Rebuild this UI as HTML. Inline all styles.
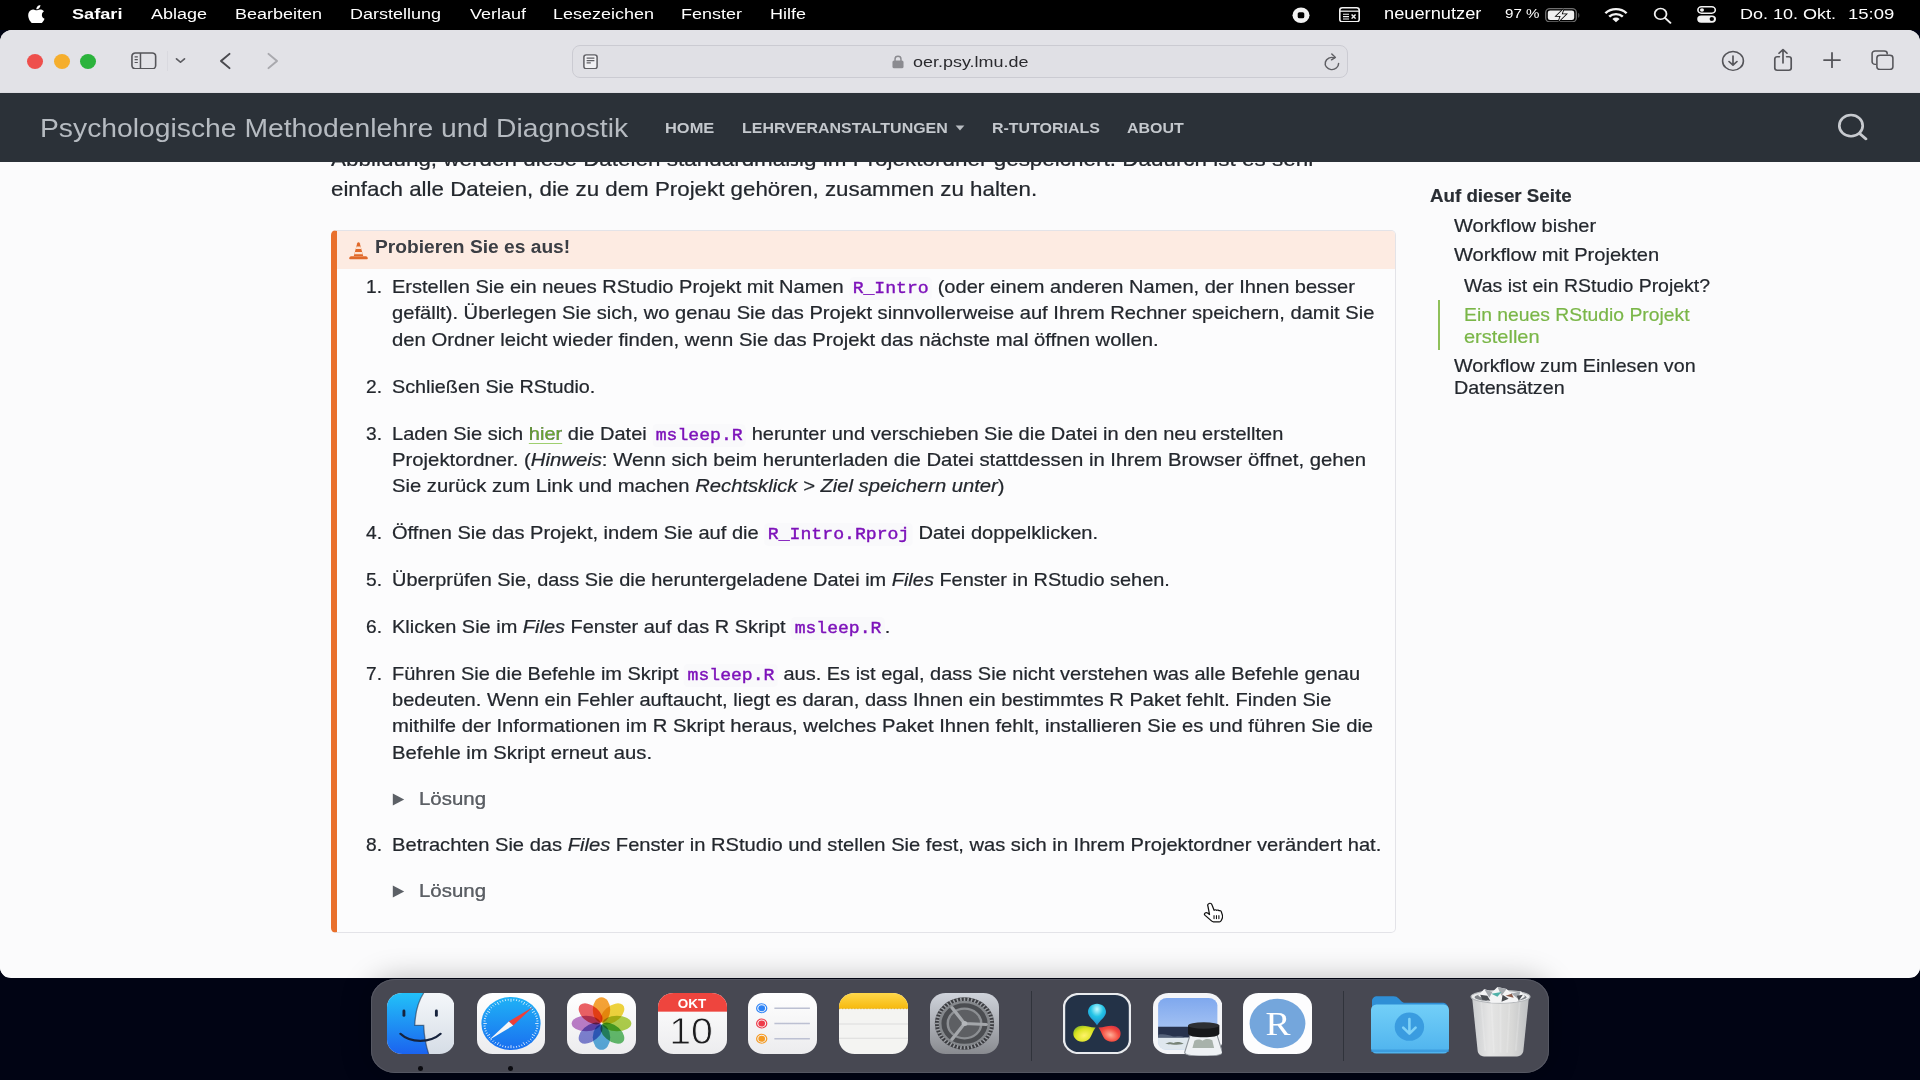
<!DOCTYPE html>
<html lang="de">
<head>
<meta charset="utf-8">
<title>Safari</title>
<style>
*{box-sizing:border-box;margin:0;padding:0}
html,body{width:1920px;height:1080px;overflow:hidden;background:#010414;font-family:"Liberation Sans",sans-serif}
.abs{position:absolute}
#desk{position:absolute;left:0;top:0;width:1920px;height:1080px;background:#010414;overflow:hidden}
/* ---------- menu bar ---------- */
#menubar{position:absolute;left:0;top:0;width:1920px;height:30px;background:#000;color:#fff;font-size:16px}
#menubar span.m{position:absolute;top:0;line-height:27px;white-space:nowrap;font-size:15.2px}
#menubar svg{position:absolute}
.sxo{transform-origin:0 50%}
.sx{display:inline-block;transform:scaleX(1.185);transform-origin:0 50%}
/* ---------- window ---------- */
#win{position:absolute;left:0;top:30px;width:1920px;height:947.800px;border-radius:12px 12px 11px 11px;background:#fbfbfc;overflow:hidden}
#toolbar{position:absolute;left:0;top:0;width:1920px;height:63px;background:#e2e2e7}
#urlbar{position:absolute;left:572px;top:15.2px;width:776px;height:32.6px;border-radius:8px;background:#e0e0e5;border:1px solid #cbcbd2}
#urltxt{position:absolute;left:913.2px;top:21.6px;font-size:15px;line-height:20px;color:#2a2a2e;white-space:nowrap}
.tl{position:absolute;top:23.8px;width:16px;height:15px;border-radius:50%}
/* ---------- site header ---------- */
#hdr{position:absolute;left:0;top:63px;width:1920px;height:69px;background:#2b3138;box-shadow:0 1px 2px rgba(0,0,0,.35)}
#brand{position:absolute;left:40px;top:18px;font-size:26px;line-height:34px;color:#b6bbc1;white-space:nowrap}
.nav{position:absolute;top:25px;font-size:15.5px;line-height:20px;font-weight:bold;color:#c4c8cd;white-space:nowrap;transform:scaleX(1.03);transform-origin:0 50%}
/* ---------- page ---------- */
#page{position:absolute;left:0;top:132px;width:1920px;height:815px;background:#fbfbfc;overflow:hidden}
.txt{position:absolute;white-space:nowrap;color:#23272d;transform-origin:0 50%;-webkit-text-stroke:.22px #23272d}
code{-webkit-text-stroke:.4px #7d12ba;font-family:"Liberation Mono",monospace;font-size:.905em;color:#7d12ba;background:#f9f9fb;padding:2px 3.2px;border-radius:4px}
a.lk{color:#6aaa2f;text-decoration:underline;text-decoration-color:#9fcf6f;text-underline-offset:3px}
#callout{position:absolute;left:331px;top:68.3px;width:1065px;height:702.7px;border:1px solid #e3e3e8;border-left:6px solid #e9702c;border-radius:5px;background:#fcfcfd}
#chead{position:absolute;left:0;top:0;width:1058px;height:38px;background:#fdebe2;border-radius:0 4px 0 0}
#ctitle{position:absolute;left:38px;top:2.700px;font-size:18px;line-height:26px;font-weight:bold;color:#3b3e44;white-space:nowrap;transform:scaleX(1.066);transform-origin:0 50%}
.toc{position:absolute;white-space:nowrap;color:#23272d;transform-origin:0 50%;-webkit-text-stroke:.2px currentColor}
/* ---------- dock ---------- */
#dock{position:absolute;left:371px;top:979px;width:1177.5px;height:94px;border-radius:24px/22px;background:#474852;box-shadow:inset 0 0 0 1px #555762,0 0 30px rgba(0,0,0,.27)}
.ic{position:absolute;top:13px;width:70px;height:62px;border-radius:15px;overflow:hidden}
.dot{position:absolute;top:87px;width:5px;height:4.6px;border-radius:50%;background:#0b0b10}
</style>
</head>
<body>
<div id="desk">

<!-- ================= WINDOW ================= -->
<div id="win">
  <div id="toolbar">
    <div class="tl" style="left:27px;background:#ee4f4c"></div>
    <div class="tl" style="left:53.75px;background:#f5ae2d"></div>
    <div class="tl" style="left:80px;background:#2bb33c"></div>
    <div id="urlbar"></div>
    <div id="urltxt" class="sxo" style="transform:scaleX(1.197)">oer.psy.lmu.de</div>
    
    <!-- sidebar toggle -->
    <svg class="abs" style="left:131px;top:21.6px" width="25.6" height="17.8" viewBox="0 0 27 19" preserveAspectRatio="none"><rect x="1" y="1" width="25" height="17" rx="3.6" fill="none" stroke="#55555a" stroke-width="1.7"/><path d="M10 1v17" stroke="#55555a" stroke-width="1.6"/><path d="M3.8 5.2h3.4M3.8 8.2h3.4M3.8 11.2h3.4" stroke="#55555a" stroke-width="1.3"/></svg>
    <div class="abs" style="left:166.500px;top:21px;width:1px;height:20px;background:#d9d9df"></div>
    <svg class="abs" style="left:175px;top:27.36px" width="11" height="7.28" viewBox="0 0 11 8" preserveAspectRatio="none"><path d="M1.5 2l4 3.8 4-3.8" fill="none" stroke="#5c5c61" stroke-width="1.7" stroke-linecap="round" stroke-linejoin="round"/></svg>
    <svg class="abs" style="left:218px;top:21.800px" width="14" height="18" viewBox="0 0 14 20" preserveAspectRatio="none"><path d="M11.5 2L3 10l8.500 8" fill="none" stroke="#4a4a4f" stroke-width="2" stroke-linecap="round" stroke-linejoin="round"/></svg>
    <svg class="abs" style="left:266px;top:21.800px" width="14" height="18" viewBox="0 0 14 20" preserveAspectRatio="none"><path d="M2.500 2L11 10l-8.500 8" fill="none" stroke="#a9a9ae" stroke-width="2" stroke-linecap="round" stroke-linejoin="round"/></svg>
    <!-- reader -->
    <svg class="abs" style="left:583px;top:23.77px" width="15" height="15.47" viewBox="0 0 15 17" preserveAspectRatio="none"><rect x=".9" y=".9" width="13.2" height="15.2" rx="2.4" fill="#f1f1f4" stroke="#5f5f64" stroke-width="1.5"/><path d="M3.6 4.6h7.800M3.600 7.200h7.800M3.600 9.800h4.200" stroke="#5f5f64" stroke-width="1.3"/></svg>
    <!-- lock -->
    <svg class="abs" style="left:891.500px;top:25.48px" width="12" height="13.65" viewBox="0 0 13 16" preserveAspectRatio="none"><rect x=".5" y="6.400" width="12" height="9.200" rx="1.800" fill="#8b8b90"/><path d="M3.300 7V4.600a3.200 3.200 0 0 1 6.400 0V7" fill="none" stroke="#8b8b90" stroke-width="1.600"/></svg>
    <!-- reload -->
    <svg class="abs" style="left:1323.200px;top:22.90px" width="18" height="18.20" viewBox="0 0 18 20" preserveAspectRatio="none"><path d="M15.600 11.600a6.700 6.700 0 1 1-4.300-6.300" fill="none" stroke="#5f5f64" stroke-width="1.500" stroke-linecap="round"/><path d="M8.800 1.200l3.600 3.600-3.900 2.700" fill="none" stroke="#5f5f64" stroke-width="1.500" stroke-linecap="round" stroke-linejoin="round"/></svg>
    <!-- download -->
    <svg class="abs" style="left:1721px;top:20.08px" width="24" height="21.84" viewBox="0 0 24 24" preserveAspectRatio="none"><circle cx="12" cy="12" r="10.400" fill="none" stroke="#55555a" stroke-width="1.600"/><path d="M12 6.600v9.600M8 12.600l4 4 4-4" fill="none" stroke="#55555a" stroke-width="1.700" stroke-linecap="round" stroke-linejoin="round"/></svg>
    <!-- share -->
    <svg class="abs" style="left:1773px;top:18.17px" width="20" height="23.66" viewBox="0 0 20 26" preserveAspectRatio="none"><path d="M6.400 9.600H4.200a2.400 2.400 0 0 0-2.400 2.400v10a2.400 2.400 0 0 0 2.400 2.400h11.600a2.400 2.400 0 0 0 2.400-2.400V12a2.400 2.400 0 0 0-2.400-2.400h-2.200" fill="none" stroke="#55555a" stroke-width="1.700" stroke-linecap="round"/><path d="M10 16.400V2.200M6 5.800l4-4 4 4" fill="none" stroke="#55555a" stroke-width="1.700" stroke-linecap="round" stroke-linejoin="round"/></svg>
    <!-- plus -->
    <svg class="abs" style="left:1822.800px;top:21.700px" width="18" height="16.380" viewBox="0 0 18 18" preserveAspectRatio="none"><path d="M9 1v16M1 9h16" stroke="#55555a" stroke-width="1.800" stroke-linecap="round"/></svg>
    <!-- tabs -->
    <svg class="abs" style="left:1871px;top:20.300px" width="23" height="20.400" viewBox="0 0 25 25" preserveAspectRatio="none"><path d="M5.600 17.600H4.400A3.200 3.200 0 0 1 1.200 14.400V4.400A3.200 3.200 0 0 1 4.400 1.200h10a3.200 3.200 0 0 1 3.200 3.200V5.600" fill="none" stroke="#55555a" stroke-width="1.700"/><rect x="6.400" y="6.400" width="17.400" height="17.400" rx="3.400" fill="none" stroke="#55555a" stroke-width="1.700"/></svg>

  </div>

  <div id="hdr">
    <div id="brand" class="sxo" style="transform:scaleX(1.088)">Psychologische Methodenlehre und Diagnostik</div>
    <div class="nav" style="left:665px;transform:scaleX(1.06)">HOME</div>
    <div class="nav" style="left:742px">LEHRVERANSTALTUNGEN</div>
    <div class="nav" style="left:992px">R-TUTORIALS</div>
    <div class="nav" style="left:1127px">ABOUT</div>
    
    <svg class="abs" style="left:955px;top:32px" width="10" height="6" viewBox="0 0 10 6"><path d="M.6.600h8.800L5 5.400z" fill="#b9bdc2"/></svg>
    <svg class="abs" style="left:1836.600px;top:20.100px" width="32" height="29" viewBox="0 0 32 32" preserveAspectRatio="none"><circle cx="14" cy="14" r="11.700" fill="none" stroke="#c7cacf" stroke-width="2.700"/><path d="M22.600 22.600l6.400 6" stroke="#c7cacf" stroke-width="2.900" stroke-linecap="round"/></svg>

  </div>

  <div id="page">
<!--PAGE-START-->

<div id="callout"><div id="chead"></div>
<svg class="abs" style="left:12px;top:9.700px" width="19" height="20" viewBox="0 0 19 20"><path d="M9.500 1.200c.7 0 1.100.3 1.300 1L14.200 15H4.800L8.200 2.200c.2-.7.600-1 1.300-1z" fill="#e0692a"/><path d="M7.400 5.600h4.200l.6 2.300H6.800zM5.900 11h7.200l.6 2.300H5.300z" fill="#fbe3d3"/><path d="M2.200 15.200h14.600c1.300 0 2 1.300 2 2.200 0 .5-.3.800-.8.800H1c-.5 0-.8-.3-.8-.8 0-.9.700-2.200 2-2.200z" fill="#e0692a"/></svg>
<div id="ctitle">Probieren Sie es aus!</div>
</div>
<div class="txt" style="left:330.6px;top:-17.6px;font-size:20.6px;line-height:29px;transform:scaleX(1.0902);">Abbildung, werden diese Dateien standardmäßig im Projektordner gespeichert. Dadurch ist es sehr</div>
<div class="txt" style="left:330.6px;top:11.9px;font-size:20.6px;line-height:29px;transform:scaleX(1.0840);">einfach alle Dateien, die zu dem Projekt gehören, zusammen zu halten.</div>
<div class="txt" style="left:365.8px;top:111.7px;font-size:18.5px;line-height:26.35px;transform:scaleX(1.0364);">1.</div>
<div class="txt" style="left:365.8px;top:211.7px;font-size:18.5px;line-height:26.35px;transform:scaleX(1.0364);">2.</div>
<div class="txt" style="left:365.8px;top:258.7px;font-size:18.5px;line-height:26.35px;transform:scaleX(1.0364);">3.</div>
<div class="txt" style="left:365.8px;top:357.7px;font-size:18.5px;line-height:26.35px;transform:scaleX(1.0364);">4.</div>
<div class="txt" style="left:365.8px;top:404.7px;font-size:18.5px;line-height:26.35px;transform:scaleX(1.0364);">5.</div>
<div class="txt" style="left:365.8px;top:451.7px;font-size:18.5px;line-height:26.35px;transform:scaleX(1.0364);">6.</div>
<div class="txt" style="left:365.8px;top:498.7px;font-size:18.5px;line-height:26.35px;transform:scaleX(1.0364);">7.</div>
<div class="txt" style="left:365.8px;top:669.7px;font-size:18.5px;line-height:26.35px;transform:scaleX(1.0364);">8.</div>
<div class="txt" style="left:392.1px;top:111.7px;font-size:18.5px;line-height:26.35px;transform:scaleX(1.0818);">Erstellen Sie ein neues RStudio Projekt mit Namen <code>R_Intro</code> (oder einem anderen Namen, der Ihnen besser</div>
<div class="txt" style="left:392.1px;top:138.1px;font-size:18.5px;line-height:26.35px;transform:scaleX(1.0881);">gefällt). Überlegen Sie sich, wo genau Sie das Projekt sinnvollerweise auf Ihrem Rechner speichern, damit Sie</div>
<div class="txt" style="left:392.1px;top:164.5px;font-size:18.5px;line-height:26.35px;transform:scaleX(1.0953);">den Ordner leicht wieder finden, wenn Sie das Projekt das nächste mal öffnen wollen.</div>
<div class="txt" style="left:392.1px;top:211.7px;font-size:18.5px;line-height:26.35px;transform:scaleX(1.0686);">Schließen Sie RStudio.</div>
<div class="txt" style="left:392.1px;top:258.7px;font-size:18.5px;line-height:26.35px;transform:scaleX(1.0815);">Laden Sie sich <a class="lk">hier</a> die Datei <code>msleep.R</code> herunter und verschieben Sie die Datei in den neu erstellten</div>
<div class="txt" style="left:392.1px;top:285.0px;font-size:18.5px;line-height:26.35px;transform:scaleX(1.0972);">Projektordner. (<i>Hinweis</i>: Wenn sich beim herunterladen die Datei stattdessen in Ihrem Browser öffnet, gehen</div>
<div class="txt" style="left:392.1px;top:311.3px;font-size:18.5px;line-height:26.35px;transform:scaleX(1.0921);">Sie zurück zum Link und machen <i>Rechtsklick &gt; Ziel speichern unter</i>)</div>
<div class="txt" style="left:392.1px;top:357.7px;font-size:18.5px;line-height:26.35px;transform:scaleX(1.0850);">Öffnen Sie das Projekt, indem Sie auf die <code>R_Intro.Rproj</code> Datei doppelklicken.</div>
<div class="txt" style="left:392.1px;top:404.7px;font-size:18.5px;line-height:26.35px;transform:scaleX(1.0775);">Überprüfen Sie, dass Sie die heruntergeladene Datei im <i>Files</i> Fenster in RStudio sehen.</div>
<div class="txt" style="left:392.1px;top:451.7px;font-size:18.5px;line-height:26.35px;transform:scaleX(1.0785);">Klicken Sie im <i>Files</i> Fenster auf das R Skript <code>msleep.R</code>.</div>
<div class="txt" style="left:392.1px;top:498.7px;font-size:18.5px;line-height:26.35px;transform:scaleX(1.0804);">Führen Sie die Befehle im Skript <code>msleep.R</code> aus. Es ist egal, dass Sie nicht verstehen was alle Befehle genau</div>
<div class="txt" style="left:392.1px;top:525.0px;font-size:18.5px;line-height:26.35px;transform:scaleX(1.0854);">bedeuten. Wenn ein Fehler auftaucht, liegt es daran, dass Ihnen ein bestimmtes R Paket fehlt. Finden Sie</div>
<div class="txt" style="left:392.1px;top:551.3px;font-size:18.5px;line-height:26.35px;transform:scaleX(1.0929);">mithilfe der Informationen im R Skript heraus, welches Paket Ihnen fehlt, installieren Sie es und führen Sie die</div>
<div class="txt" style="left:392.1px;top:577.7px;font-size:18.5px;line-height:26.35px;transform:scaleX(1.0949);">Befehle im Skript erneut aus.</div>
<div class="txt" style="left:419.4px;top:623.7px;font-size:18.5px;line-height:26.35px;transform:scaleX(1.1037);color:#5c6066">Lösung</div>
<div class="txt" style="left:392.1px;top:669.7px;font-size:18.5px;line-height:26.35px;transform:scaleX(1.0883);">Betrachten Sie das <i>Files</i> Fenster in RStudio und stellen Sie fest, was sich in Ihrem Projektordner verändert hat.</div>
<div class="txt" style="left:419.4px;top:715.7px;font-size:18.5px;line-height:26.35px;transform:scaleX(1.1037);color:#5c6066">Lösung</div>
<div class="toc" style="left:1429.6px;top:22.8px;font-size:18.4px;line-height:22px;transform:scaleX(1.0187);font-weight:bold;color:#2a2e34">Auf dieser Seite</div>
<div class="toc" style="left:1453.6px;top:52.8px;font-size:18.4px;line-height:22px;transform:scaleX(1.0890);">Workflow bisher</div>
<div class="toc" style="left:1453.6px;top:82.3px;font-size:18.4px;line-height:22px;transform:scaleX(1.0926);">Workflow mit Projekten</div>
<div class="toc" style="left:1464.1px;top:112.6px;font-size:18.4px;line-height:22px;transform:scaleX(1.0591);">Was ist ein RStudio Projekt?</div>
<div class="toc" style="left:1464.1px;top:141.8px;font-size:18.4px;line-height:22px;transform:scaleX(1.0508);color:#7ab648">Ein neues RStudio Projekt</div>
<div class="toc" style="left:1464.1px;top:163.8px;font-size:18.4px;line-height:22px;transform:scaleX(1.0875);color:#7ab648">erstellen</div>
<div class="toc" style="left:1453.6px;top:193.3px;font-size:18.4px;line-height:22px;transform:scaleX(1.0712);">Workflow zum Einlesen von</div>
<div class="toc" style="left:1453.6px;top:215.3px;font-size:18.4px;line-height:22px;transform:scaleX(1.0710);">Datensätzen</div>
<svg class="abs" style="left:392px;top:630.8px" width="13" height="13" viewBox="0 0 13 13"><path d="M.8.600l11.400 5.900L.8 12.400z" fill="#5c6066"/></svg>
<svg class="abs" style="left:392px;top:722.8px" width="13" height="13" viewBox="0 0 13 13"><path d="M.8.600l11.400 5.900L.8 12.400z" fill="#5c6066"/></svg>
<div class="abs" style="left:1438.300px;top:138.300px;width:2px;height:50.200px;background:#8fc05a"></div>
<!--PAGE-END-->
<svg class="abs" style="left:1201.800px;top:740px" width="21.500" height="21.600" viewBox="0 0 22 24" preserveAspectRatio="none"><path d="M7.300 1.600c1.200-.5 2.300.1 2.800 1.300l2.300 6.300c.6-.7 1.900-.8 2.600.1.700-.6 1.900-.5 2.500.5.900-.4 2 .1 2.300 1.100l1 3.400c.6 2 .2 3.400-.5 4.800l-.9 1.900c-.3.700-.9 1-1.600 1h-6.100c-.7 0-1.200-.2-1.700-.7l-6.800-6.400c-.8-.8-.8-1.900-.1-2.600.8-.7 1.800-.6 2.600 0l2 1.600L6 4.400c-.4-1.200.1-2.300 1.300-2.800z" fill="#fff" stroke="#111" stroke-width="1.300" stroke-linejoin="round"/><path d="M12.300 15v3.600M14.800 15v3.600M17.300 15v3.600" stroke="#111" stroke-width="1.100" stroke-linecap="round"/></svg>

  </div>
</div>

<!-- ================= MENU BAR ================= -->
<div id="menubar">
  
  <svg style="left:27.600px;top:4.600px" width="17.600" height="18.700" viewBox="2 0 21 24" preserveAspectRatio="none"><path fill="#fff" d="M12.152 6.896c-.948 0-2.415-1.078-3.96-1.04-2.04.027-3.91 1.183-4.961 3.014-2.117 3.675-.546 9.103 1.519 12.09 1.013 1.454 2.208 3.09 3.792 3.039 1.52-.065 2.09-.987 3.935-.987 1.831 0 2.35.987 3.96.948 1.637-.026 2.676-1.48 3.676-2.948 1.156-1.688 1.636-3.325 1.662-3.415-.039-.013-3.182-1.221-3.22-4.857-.026-3.04 2.48-4.494 2.597-4.559-1.429-2.09-3.623-2.324-4.39-2.376-2-.156-3.675 1.09-4.61 1.09zM15.53 3.83c.843-1.012 1.4-2.427 1.245-3.83-1.207.052-2.662.805-3.532 1.818-.78.896-1.454 2.338-1.273 3.714 1.338.104 2.715-.688 3.559-1.701"/></svg>
  <span class="m sx" style="left:71.5px;font-weight:bold;transform:scaleX(1.195)">Safari</span>
  <span class="m sx" style="left:151px">Ablage</span>
  <span class="m sx" style="left:235px">Bearbeiten</span>
  <span class="m sx" style="left:350px">Darstellung</span>
  <span class="m sx" style="left:470px">Verlauf</span>
  <span class="m sx" style="left:553px">Lesezeichen</span>
  <span class="m sx" style="left:681px">Fenster</span>
  <span class="m sx" style="left:770px">Hilfe</span>
  <!-- record icon -->
  <svg style="left:1292px;top:6.81px" width="18" height="16.38" viewBox="0 0 18 18" preserveAspectRatio="none"><circle cx="9" cy="9" r="8.5" fill="#f2f2f2"/><rect x="5.700" y="5.700" width="6.600" height="6.600" rx="1.700" fill="#000"/></svg>
  <!-- keyboard/input icon -->
  <svg style="left:1339px;top:6.76px" width="21" height="15.47" viewBox="0 0 21 17" preserveAspectRatio="none"><rect x=".8" y=".8" width="19.4" height="15.4" rx="2.6" fill="none" stroke="#f2f2f2" stroke-width="1.6"/><path d="M1 4.6h19" stroke="#f2f2f2" stroke-width="1.4"/><path d="M4 8h6M4 10.6h6M4 13.2h6" stroke="#f2f2f2" stroke-width="1.2"/><path d="M12.6 8.2l4 4.6M16.6 8.2l-4 4.6" stroke="#f2f2f2" stroke-width="1.5"/></svg>
  <span class="m sx" style="left:1383.5px;font-size:16.6px;line-height:28.3px;transform:scaleX(1.10)">neuernutzer</span>
  <span class="m sx" style="left:1504.500px;font-size:13.1px;line-height:28.4px;transform:scaleX(1.155)">97&nbsp;%</span>
  <!-- battery -->
  <svg style="left:1545px;top:7.72px" width="36" height="14.56" viewBox="0 0 36 16" preserveAspectRatio="none"><rect x=".7" y=".7" width="30.6" height="14.6" rx="4.2" fill="none" stroke="#707070" stroke-width="1.300"/><rect x="2.8" y="2.8" width="26.4" height="10.4" rx="2.4" fill="#f0f0f0"/><path d="M33.4 5.4c1.2.5 1.2 4.7 0 5.2z" fill="#707070"/><path d="M18.6 1.2l-7.2 7.6h4.2l-2 6 7.4-7.8h-4.3z" fill="#f0f0f0" stroke="#000" stroke-width="1.7" paint-order="stroke"/></svg>
  <!-- wifi -->
  <svg style="left:1604px;top:6.81px" width="24" height="16.38" viewBox="0 0 24 18" preserveAspectRatio="none"><g fill="none" stroke="#f2f2f2" stroke-width="2.5" stroke-linecap="butt"><path d="M1.4 6.8a15 15 0 0 1 21.2 0"/><path d="M5.2 10.6a9.6 9.6 0 0 1 13.6 0"/></g><path d="M12 16.8l-3.6-3.7a5.1 5.1 0 0 1 7.2 0z" fill="#f2f2f2"/></svg>
  <!-- search -->
  <svg style="left:1653px;top:6.86px" width="19" height="17.29" viewBox="0 0 19 19" preserveAspectRatio="none"><circle cx="7.6" cy="7.6" r="5.9" fill="none" stroke="#f2f2f2" stroke-width="1.8"/><path d="M12 12l5.4 5.4" stroke="#f2f2f2" stroke-width="2" stroke-linecap="round"/></svg>
  <!-- control center -->
  <svg style="left:1697px;top:5.86px" width="20" height="17.29" viewBox="0 0 20 19" preserveAspectRatio="none"><rect x=".9" y=".9" width="17.4" height="7" rx="3.5" fill="none" stroke="#f2f2f2" stroke-width="1.6"/><circle cx="5" cy="4.4" r="2" fill="#f2f2f2"/><rect x=".2" y="10.4" width="18.8" height="8" rx="4" fill="#f2f2f2"/><circle cx="14.8" cy="14.4" r="2.2" fill="#000"/></svg>
  <span class="m sx" style="left:1740px;font-size:15px;transform:scaleX(1.2)">Do. 10. Okt.</span><span class="m sx" style="left:1848px;font-size:15px;transform:scaleX(1.233)">15:09</span>

</div>

<!-- ================= DOCK ================= -->
<div id="dock">
  <!--DOCK-START-->
<svg width="0" height="0" style="position:absolute"><defs>
<linearGradient id="gFb" x1="0" y1="0" x2="0" y2="1"><stop offset="0" stop-color="#22c1f8"/><stop offset="1" stop-color="#1b63ef"/></linearGradient>
<linearGradient id="gFw" x1="0" y1="0" x2="0" y2="1"><stop offset="0" stop-color="#f4f7fa"/><stop offset="1" stop-color="#d6dde6"/></linearGradient>
<linearGradient id="gW" x1="0" y1="0" x2="0" y2="1"><stop offset="0" stop-color="#ffffff"/><stop offset="1" stop-color="#ececee"/></linearGradient>
<linearGradient id="gSaf" x1="0" y1="0" x2="0" y2="1"><stop offset="0" stop-color="#1fb2f6"/><stop offset="1" stop-color="#1a6ff0"/></linearGradient>
<linearGradient id="gNote" x1="0" y1="0" x2="0" y2="1"><stop offset="0" stop-color="#ffd84a"/><stop offset="1" stop-color="#f6b90e"/></linearGradient>
<linearGradient id="gGear" x1="0" y1="0" x2="0" y2="1"><stop offset="0" stop-color="#d9dadc"/><stop offset="1" stop-color="#8b8d91"/></linearGradient>
<linearGradient id="gFold" x1="0" y1="0" x2="0" y2="1"><stop offset="0" stop-color="#72cff8"/><stop offset="1" stop-color="#4fb3ee"/></linearGradient>
<linearGradient id="gTrash" x1="0" y1="0" x2="1" y2="0"><stop offset="0" stop-color="#d4d6d8"/><stop offset=".3" stop-color="#f1f1f0"/><stop offset=".7" stop-color="#e3e3e1"/><stop offset="1" stop-color="#c6c8ca"/></linearGradient>
<radialGradient id="gB" cx=".5" cy=".25" r=".7"><stop offset="0" stop-color="#c6fbff"/><stop offset=".5" stop-color="#23c4e6"/><stop offset="1" stop-color="#1f8fd0"/></radialGradient>
<radialGradient id="gY" cx=".35" cy=".4" r=".7"><stop offset="0" stop-color="#fff36a"/><stop offset=".6" stop-color="#d9e21f"/><stop offset="1" stop-color="#7fb52c"/></radialGradient>
<radialGradient id="gR" cx=".6" cy=".4" r=".7"><stop offset="0" stop-color="#ffb199"/><stop offset=".55" stop-color="#f4483c"/><stop offset="1" stop-color="#c52a4a"/></radialGradient>
<clipPath id="cpIc"><rect x="0" y="0" width="68" height="68" rx="15.500"/></clipPath>
</defs></svg>
<svg class="abs" style="left:15.5px;top:14.0px" width="67.5" height="61.0" viewBox="0 0 68 68" preserveAspectRatio="none"><g clip-path="url(#cpIc)"><rect width="68" height="68" fill="url(#gFw)"/>
<path d="M0 0h37c-5.500 9-8.500 22-9 36h9c.3 11 1.800 21 5 32H0z" fill="url(#gFb)"/>
<path d="M37 0c-5.500 9-8.500 22-9 36h9c.3 11 1.800 21 5 32" fill="none" stroke="#1d2b45" stroke-width="1.300" opacity=".55"/>
<rect x="15.600" y="18.500" width="2.900" height="8" rx="1.450" fill="#16233d"/><rect x="48.300" y="18.500" width="2.900" height="8" rx="1.450" fill="#16233d"/>
<path d="M13.500 45.500c10 10.500 30 10.500 40.500 0" fill="none" stroke="#16233d" stroke-width="2.300" stroke-linecap="round"/></g></svg>
<svg class="abs" style="left:106.0px;top:14.0px" width="68.0" height="61.0" viewBox="0 0 68 68" preserveAspectRatio="none"><rect width="68" height="68" rx="15.500" fill="url(#gW)"/><circle cx="34" cy="34" r="29.600" fill="url(#gSaf)"/>
<path d="M34.00 9.80L34.00 6.40M36.68 8.54L36.88 6.55M39.32 8.96L39.74 7.00M41.91 9.65L42.53 7.75M44.41 10.61L45.23 8.79M46.10 13.04L47.80 10.10M49.05 13.29L50.22 11.67M51.13 14.98L52.47 13.49M53.02 16.87L54.51 15.53M54.71 18.95L56.33 17.78M54.96 21.90L57.90 20.20M57.39 23.59L59.21 22.77M58.35 26.09L60.25 25.47M59.04 28.68L61.00 28.26M59.46 31.32L61.45 31.12M58.20 34.00L61.60 34.00M59.46 36.68L61.45 36.88M59.04 39.32L61.00 39.74M58.35 41.91L60.25 42.53M57.39 44.41L59.21 45.23M54.96 46.10L57.90 47.80M54.71 49.05L56.33 50.22M53.02 51.13L54.51 52.47M51.13 53.02L52.47 54.51M49.05 54.71L50.22 56.33M46.10 54.96L47.80 57.90M44.41 57.39L45.23 59.21M41.91 58.35L42.53 60.25M39.32 59.04L39.74 61.00M36.68 59.46L36.88 61.45M34.00 58.20L34.00 61.60M31.32 59.46L31.12 61.45M28.68 59.04L28.26 61.00M26.09 58.35L25.47 60.25M23.59 57.39L22.77 59.21M21.90 54.96L20.20 57.90M18.95 54.71L17.78 56.33M16.87 53.02L15.53 54.51M14.98 51.13L13.49 52.47M13.29 49.05L11.67 50.22M13.04 46.10L10.10 47.80M10.61 44.41L8.79 45.23M9.65 41.91L7.75 42.53M8.96 39.32L7.00 39.74M8.54 36.68L6.55 36.88M9.80 34.00L6.40 34.00M8.54 31.32L6.55 31.12M8.96 28.68L7.00 28.26M9.65 26.09L7.75 25.47M10.61 23.59L8.79 22.77M13.04 21.90L10.10 20.20M13.29 18.95L11.67 17.78M14.98 16.87L13.49 15.53M16.87 14.98L15.53 13.49M18.95 13.29L17.78 11.67M21.90 13.04L20.20 10.10M23.59 10.61L22.77 8.79M26.09 9.65L25.47 7.75M28.68 8.96L28.26 7.00M31.32 8.54L31.12 6.55" stroke="#fff" stroke-width=".9" opacity=".9"/>
<path d="M56 15.500L31.800 31.800 36.200 36.200z" fill="#ee3f39"/><path d="M12 52.500L31.800 31.800 36.200 36.200z" fill="#f6f6f6"/></svg>
<svg class="abs" style="left:196.0px;top:14.0px" width="69.0" height="61.0" viewBox="0 0 68 68" preserveAspectRatio="none"><rect width="68" height="68" rx="15.500" fill="url(#gW)"/><ellipse cx="34" cy="18.800" rx="8.600" ry="14.200" fill="#f6981a" opacity=".88" style="mix-blend-mode:multiply" transform="rotate(0 34 34)"/><ellipse cx="34" cy="18.800" rx="8.600" ry="14.200" fill="#f0cf22" opacity=".88" style="mix-blend-mode:multiply" transform="rotate(45 34 34)"/><ellipse cx="34" cy="18.800" rx="8.600" ry="14.200" fill="#a6cc33" opacity=".88" style="mix-blend-mode:multiply" transform="rotate(90 34 34)"/><ellipse cx="34" cy="18.800" rx="8.600" ry="14.200" fill="#4fb65a" opacity=".88" style="mix-blend-mode:multiply" transform="rotate(135 34 34)"/><ellipse cx="34" cy="18.800" rx="8.600" ry="14.200" fill="#45a3dc" opacity=".88" style="mix-blend-mode:multiply" transform="rotate(180 34 34)"/><ellipse cx="34" cy="18.800" rx="8.600" ry="14.200" fill="#6f74cf" opacity=".88" style="mix-blend-mode:multiply" transform="rotate(225 34 34)"/><ellipse cx="34" cy="18.800" rx="8.600" ry="14.200" fill="#b66ec4" opacity=".88" style="mix-blend-mode:multiply" transform="rotate(270 34 34)"/><ellipse cx="34" cy="18.800" rx="8.600" ry="14.200" fill="#ec4b4f" opacity=".88" style="mix-blend-mode:multiply" transform="rotate(315 34 34)"/></svg>
<svg class="abs" style="left:286.5px;top:14.0px" width="69.0" height="61.0" viewBox="0 0 68 68" preserveAspectRatio="none"><g clip-path="url(#cpIc)"><rect width="68" height="68" fill="url(#gW)"/><rect width="68" height="20.800" fill="#ee453e"/></g>
<text x="33.500" y="16.200" text-anchor="middle" font-family="Liberation Sans" font-weight="bold" font-size="13.500" fill="#fff" textLength="28" lengthAdjust="spacingAndGlyphs">OKT</text>
<text x="32.500" y="57" text-anchor="middle" font-family="Liberation Sans" font-size="41" fill="#1d1d1f" stroke="#f5f5f6" stroke-width=".9" textLength="43" lengthAdjust="spacingAndGlyphs">10</text></svg>
<svg class="abs" style="left:377.0px;top:14.0px" width="69.0" height="61.0" viewBox="0 0 68 68" preserveAspectRatio="none"><rect width="68" height="68" rx="15.500" fill="url(#gW)"/><circle cx="13.500" cy="17" r="5" fill="none" stroke="#2f84f6" stroke-width="1.200"/><circle cx="13.500" cy="17" r="3.300" fill="#2f84f6"/><path d="M26 17h35" stroke="#bcc0d2" stroke-width="1.700"/><circle cx="13.500" cy="34" r="5" fill="none" stroke="#ee3b4a" stroke-width="1.200"/><circle cx="13.500" cy="34" r="3.300" fill="#ee3b4a"/><path d="M26 34h35" stroke="#bcc0d2" stroke-width="1.700"/><circle cx="13.500" cy="51" r="5" fill="none" stroke="#f59b23" stroke-width="1.200"/><circle cx="13.500" cy="51" r="3.300" fill="#f59b23"/><path d="M26 51h35" stroke="#bcc0d2" stroke-width="1.700"/></svg>
<svg class="abs" style="left:468.0px;top:14.0px" width="69.0" height="61.0" viewBox="0 0 68 68" preserveAspectRatio="none"><g clip-path="url(#cpIc)"><rect width="68" height="68" fill="#f4f4f2"/><rect width="68" height="17.500" fill="url(#gNote)"/>
<path d="M0 17.500h68" stroke="#d9a30c" stroke-width=".8" stroke-dasharray="1.200 1.800"/>
<path d="M0 34.500h68M0 50.500h68" stroke="#dcdcdc" stroke-width="1.200"/></g></svg>
<svg class="abs" style="left:558.5px;top:14.0px" width="69.0" height="61.0" viewBox="0 0 68 68" preserveAspectRatio="none"><linearGradient id="gGear2" x1="0" y1="0" x2="0" y2="1"><stop offset="0" stop-color="#cfd3db"/><stop offset="1" stop-color="#898b90"/></linearGradient>
<rect width="68" height="68" rx="15.500" fill="url(#gGear2)"/>
<circle cx="34" cy="34" r="29.200" fill="#3b3c40"/>
<path d="M34.00 9.20L34.00 5.00M37.24 9.41L37.79 5.25M40.42 10.05L41.51 5.99M43.49 11.09L45.10 7.21M46.40 12.52L48.50 8.89M49.10 14.32L51.65 10.99M51.54 16.46L54.51 13.49M53.68 18.90L57.01 16.35M55.48 21.60L59.11 19.50M56.91 24.51L60.79 22.90M57.95 27.58L62.01 26.49M58.59 30.76L62.75 30.21M58.80 34.00L63.00 34.00M58.59 37.24L62.75 37.79M57.95 40.42L62.01 41.51M56.91 43.49L60.79 45.10M55.48 46.40L59.11 48.50M53.68 49.10L57.01 51.65M51.54 51.54L54.51 54.51M49.10 53.68L51.65 57.01M46.40 55.48L48.50 59.11M43.49 56.91L45.10 60.79M40.42 57.95L41.51 62.01M37.24 58.59L37.79 62.75M34.00 58.80L34.00 63.00M30.76 58.59L30.21 62.75M27.58 57.95L26.49 62.01M24.51 56.91L22.90 60.79M21.60 55.48L19.50 59.11M18.90 53.68L16.35 57.01M16.46 51.54L13.49 54.51M14.32 49.10L10.99 51.65M12.52 46.40L8.89 48.50M11.09 43.49L7.21 45.10M10.05 40.42L5.99 41.51M9.41 37.24L5.25 37.79M9.20 34.00L5.00 34.00M9.41 30.76L5.25 30.21M10.05 27.58L5.99 26.49M11.09 24.51L7.21 22.90M12.52 21.60L8.89 19.50M14.32 18.90L10.99 16.35M16.46 16.46L13.49 13.49M18.90 14.32L16.35 10.99M21.60 12.52L19.50 8.89M24.51 11.09L22.90 7.21M27.58 10.05L26.49 5.99M30.76 9.41L30.21 5.25" stroke="#9da0a5" stroke-width="1.500"/>
<circle cx="34" cy="34" r="24" fill="#4b4d51" stroke="#85888c" stroke-width="2.600"/>
<circle cx="34" cy="34" r="16.500" fill="#5d5f63" stroke="#8c8f93" stroke-width="2.400"/>
<path d="M34 34L21.67 16.39M34 34L55.47 35.13M34 34L21.67 51.61" stroke="#a4a7ab" stroke-width="3.400" stroke-linecap="round"/>
<circle cx="34" cy="34" r="2.800" fill="#b4b7bb"/></svg>
<svg class="abs" style="left:691.5px;top:14.0px" width="68.0" height="61.0" viewBox="0 0 68 68" preserveAspectRatio="none"><rect x="1" y="1" width="66" height="66" rx="15" fill="#233247" stroke="#e9ebee" stroke-width="2.400"/>
<path d="M34 12c5 0 9 4 9 9 0 6-6 9-9 15-3-6-9-9-9-15 0-5 4-9 9-9z" fill="url(#gB)"/>
<path d="M34 12c5 0 9 4 9 9 0 6-6 9-9 15-3-6-9-9-9-15 0-5 4-9 9-9z" fill="url(#gY)" transform="rotate(-118 34 37.600)"/>
<path d="M34 12c5 0 9 4 9 9 0 6-6 9-9 15-3-6-9-9-9-15 0-5 4-9 9-9z" fill="url(#gR)" transform="rotate(118 34 37.600)"/></svg>
<svg class="abs" style="left:781.5px;top:14.0px" width="69.5" height="63.0" viewBox="0 0 68 70" preserveAspectRatio="none"><linearGradient id="gSky" x1="0" y1="0" x2="0" y2="1"><stop offset="0" stop-color="#7fa8ee"/><stop offset="1" stop-color="#bcd3f6"/></linearGradient>
<g clip-path="url(#cpIc)"><rect width="68" height="68" fill="#f4f5f8"/>
<rect x="5" y="5.500" width="58" height="57.500" rx="8.500" fill="url(#gSky)"/>
<path d="M5 49h58v5.500a8.500 8.500 0 0 1-8.500 8.500h-41a8.500 8.500 0 0 1-8.500-8.500z" fill="#dfe7ee"/>
<path d="M5 37.600h40v11.800H5z" fill="#27324d"/>
<path d="M5 46.500c6-1.500 10 .5 14 1.500s8-1 12 1.400H5z" fill="#55627a"/>
<path d="M12 56.500c3-2.200 6-2.200 8-1 3-1.600 7-1.200 10 .800-5 1.500-13 1.500-18 .2z" fill="#5e6a5a" opacity=".8"/></g>
<path d="M36.500 46l-5.500 20c0 2.600 6 4 18.500 4s18.500-1.400 18.500-4l-5.500-20z" fill="#eef1f4" stroke="#8d939a" stroke-width="1.100"/>
<path d="M40.500 53c3-2 6-1.500 8 0 2.500-2.500 6-2.500 9.500-.5l1.800 8.500H38.600z" fill="#8a978c" opacity=".7"/>
<path d="M34.300 36.200v8.600c0 3.400 6.800 4.400 15.300 4.400s15.300-1 15.300-4.400v-8.600z" fill="#17181b"/>
<ellipse cx="49.600" cy="36.200" rx="15.300" ry="3.600" fill="#2d2f33"/></svg>
<svg class="abs" style="left:872.0px;top:14.0px" width="69.0" height="61.0" viewBox="0 0 68 68" preserveAspectRatio="none"><rect width="68" height="68" rx="15.500" fill="#fdfdfe"/><circle cx="34" cy="34" r="27.500" fill="#74a6dc"/>
<text x="34.500" y="46.500" text-anchor="middle" font-family="Liberation Serif" font-size="37" fill="#fff">R</text></svg>
<svg class="abs" style="left:998.5px;top:12.5px" width="80.0" height="63.5" viewBox="0 0 80 66" preserveAspectRatio="none"><path d="M2 10c0-3.500 2-5.500 5.500-5.500h16c2.500 0 3.800.8 5.500 2.600l2.600 2.800c1 1 2 1.400 3.600 1.400H72c3.500 0 6 2 6 5.500V20H2z" fill="#2f8fd6"/>
<rect x="1" y="13" width="78" height="51" rx="5.500" fill="url(#gFold)"/>
<path d="M1 61h78" stroke="#2f8fd6" stroke-width="2.500" opacity=".6"/>
<circle cx="39.400" cy="36" r="14.700" fill="#3a9ce0"/>
<path d="M39.400 28v14.500M33.200 37l6.200 6.200 6.200-6.200" fill="none" stroke="#7fd2f8" stroke-width="2.600" stroke-linecap="round" stroke-linejoin="round"/></svg>
<svg class="abs" style="left:1097.5px;top:6.5px" width="63.0" height="72.5" viewBox="0 0 62 74" preserveAspectRatio="none"><path d="M3 11l5.500 55c.5 4 3.500 6 8 6h29c4.500 0 7.500-2 8-6L59 11z" fill="url(#gTrash)" opacity=".93"/>
<path d="M12 16l4 50M22 16l2.500 52M31 16v52M40 16l-2.500 52M50 16l-4 50" stroke="#fff" stroke-width="1.600" opacity=".18"/>
<ellipse cx="31" cy="11" rx="29" ry="6.500" fill="#e9eaec" stroke="#b4b7ba" stroke-width="1.200"/>
<ellipse cx="31" cy="11.500" rx="25.500" ry="4.600" fill="#7f8388"/>
<path d="M9 10l6-7 8 3 5-5 9 2 5 5 9-3 4 6-8 5-12 1-13 0z" fill="#f4f4f5"/>
<path d="M15 3l8 3-3 6zM28 1l9 2-5 7zM42 8l9-3-3 8z" fill="#a5a9ae"/><path d="M11 9l7 1 3 5-8-1zM33 9l6 4-7 3zM47 10l6-1-4 6z" fill="#4a4d52"/>
<path d="M22 8l6 3 4-5z" fill="#4fb0a8"/><path d="M36 10l6-2 2 4z" fill="#8a5a48"/></svg>
<div class="abs" style="left:660px;top:11.5px;width:1px;height:70px;background:#30333b"></div>
<div class="abs" style="left:972px;top:11.5px;width:1px;height:70px;background:#30333b"></div>
<div class="dot" style="left:46.5px"></div><div class="dot" style="left:137.10000000000002px"></div>
<!--DOCK-END-->
</div>

</div>
</body>
</html>
